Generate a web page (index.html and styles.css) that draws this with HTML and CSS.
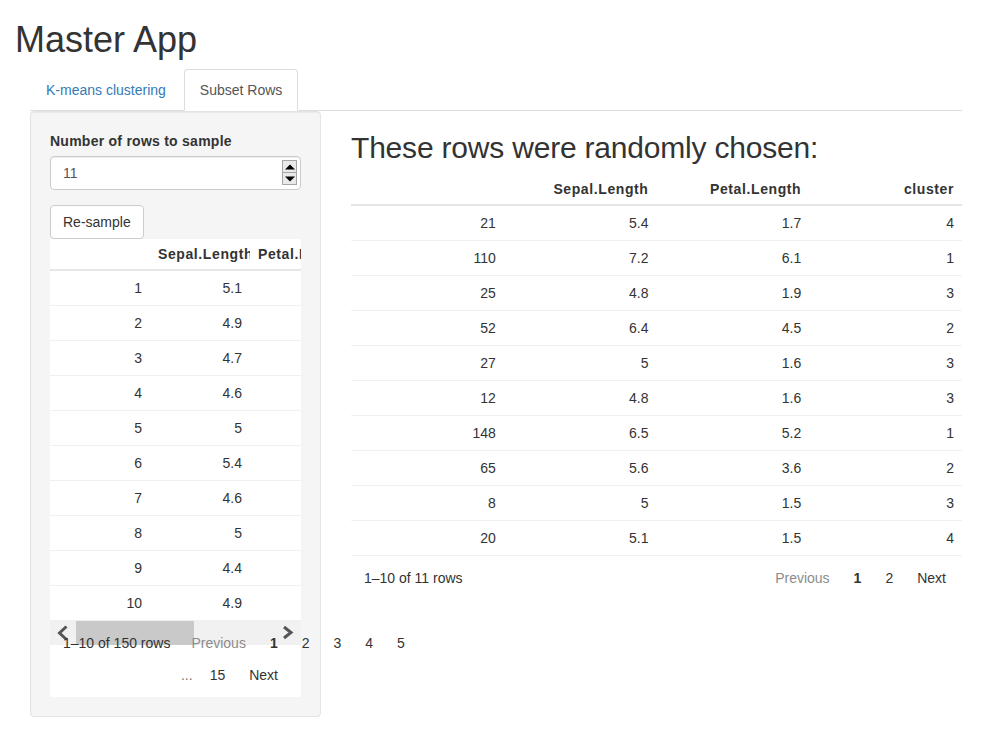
FILE: index.html
```html
<!DOCTYPE html>
<html lang="en">
<head>
<meta charset="utf-8">
<title>Master App</title>
<link rel="stylesheet" href="styles.css">
</head>
<body>
<div class="page">
  <h1 class="title">Master App</h1>
  <div class="app">
    <ul class="tabs">
      <li><a class="tab" href="#">K-means clustering</a></li>
      <li><a class="tab active" href="#">Subset Rows</a></li>
    </ul>
    <div class="content">
      <aside class="well">
        <label class="label">Number of rows to sample</label>
        <div class="num-input">
          <span class="num-value">11</span>
          <span class="spinner">
            <span class="spin-btn"><svg width="12" height="10" viewBox="0 0 12 10"><polygon points="1,7.5 11,7.5 6,2.5" fill="#000"/></svg></span>
            <span class="spin-btn"><svg width="12" height="10" viewBox="0 0 12 10"><polygon points="1,2.5 11,2.5 6,7.5" fill="#000"/></svg></span>
          </span>
        </div>
        <button class="btn">Re-sample</button>
        <div class="rt rt-small">
          <div class="rt-scroll">
            <div class="rt-row rt-head"><div class="rt-cell"></div><div class="rt-cell">Sepal.Length</div><div class="rt-cell">Petal.Length</div><div class="rt-cell">cluster</div></div>
            <div class="rt-row"><div class="rt-cell">1</div><div class="rt-cell">5.1</div><div class="rt-cell">1.4</div><div class="rt-cell">3</div></div>
            <div class="rt-row"><div class="rt-cell">2</div><div class="rt-cell">4.9</div><div class="rt-cell">1.4</div><div class="rt-cell">3</div></div>
            <div class="rt-row"><div class="rt-cell">3</div><div class="rt-cell">4.7</div><div class="rt-cell">1.3</div><div class="rt-cell">3</div></div>
            <div class="rt-row"><div class="rt-cell">4</div><div class="rt-cell">4.6</div><div class="rt-cell">1.5</div><div class="rt-cell">3</div></div>
            <div class="rt-row"><div class="rt-cell">5</div><div class="rt-cell">5</div><div class="rt-cell">1.4</div><div class="rt-cell">3</div></div>
            <div class="rt-row"><div class="rt-cell">6</div><div class="rt-cell">5.4</div><div class="rt-cell">1.7</div><div class="rt-cell">4</div></div>
            <div class="rt-row"><div class="rt-cell">7</div><div class="rt-cell">4.6</div><div class="rt-cell">1.4</div><div class="rt-cell">3</div></div>
            <div class="rt-row"><div class="rt-cell">8</div><div class="rt-cell">5</div><div class="rt-cell">1.5</div><div class="rt-cell">3</div></div>
            <div class="rt-row"><div class="rt-cell">9</div><div class="rt-cell">4.4</div><div class="rt-cell">1.4</div><div class="rt-cell">3</div></div>
            <div class="rt-row"><div class="rt-cell">10</div><div class="rt-cell">4.9</div><div class="rt-cell">1.5</div><div class="rt-cell">3</div></div>
          </div>
          <div class="rt-pagination-small">
            <div class="scrollbar">
              <span class="sb-thumb"></span>
              <svg class="sb-arrows" width="251" height="24" viewBox="0 0 251 24"><polyline points="16.5,5.5 9.5,12 16.5,18.5" fill="none" stroke="#555" stroke-width="3"/><polyline points="234,6 241,11.5 234,17" fill="none" stroke="#555" stroke-width="3"/></svg>
            </div>
            <div class="pg-line">
              <span class="rt-info">1–10 of 150 rows</span>
              <span class="rt-btn disabled">Previous</span>
              <span class="rt-btn current">1</span>
              <span class="rt-btn">2</span>
              <span class="rt-btn">3</span>
              <span class="rt-btn">4</span>
              <span class="rt-btn">5</span>
            </div>
            <div class="pg-line pg-line-end">
              <span class="rt-ellipsis">...</span>
              <span class="rt-btn">15</span>
              <span class="rt-btn">Next</span>
            </div>
          </div>
        </div>
      </aside>
      <main class="main">
        <h2 class="heading">These rows were randomly chosen:</h2>
        <div class="rt">
          <div class="rt-row rt-head"><div class="rt-cell"></div><div class="rt-cell">Sepal.Length</div><div class="rt-cell">Petal.Length</div><div class="rt-cell">cluster</div></div>
          <div class="rt-row"><div class="rt-cell">21</div><div class="rt-cell">5.4</div><div class="rt-cell">1.7</div><div class="rt-cell">4</div></div>
          <div class="rt-row"><div class="rt-cell">110</div><div class="rt-cell">7.2</div><div class="rt-cell">6.1</div><div class="rt-cell">1</div></div>
          <div class="rt-row"><div class="rt-cell">25</div><div class="rt-cell">4.8</div><div class="rt-cell">1.9</div><div class="rt-cell">3</div></div>
          <div class="rt-row"><div class="rt-cell">52</div><div class="rt-cell">6.4</div><div class="rt-cell">4.5</div><div class="rt-cell">2</div></div>
          <div class="rt-row"><div class="rt-cell">27</div><div class="rt-cell">5</div><div class="rt-cell">1.6</div><div class="rt-cell">3</div></div>
          <div class="rt-row"><div class="rt-cell">12</div><div class="rt-cell">4.8</div><div class="rt-cell">1.6</div><div class="rt-cell">3</div></div>
          <div class="rt-row"><div class="rt-cell">148</div><div class="rt-cell">6.5</div><div class="rt-cell">5.2</div><div class="rt-cell">1</div></div>
          <div class="rt-row"><div class="rt-cell">65</div><div class="rt-cell">5.6</div><div class="rt-cell">3.6</div><div class="rt-cell">2</div></div>
          <div class="rt-row"><div class="rt-cell">8</div><div class="rt-cell">5</div><div class="rt-cell">1.5</div><div class="rt-cell">3</div></div>
          <div class="rt-row"><div class="rt-cell">20</div><div class="rt-cell">5.1</div><div class="rt-cell">1.5</div><div class="rt-cell">4</div></div>
          <div class="rt-pagination">
            <span class="rt-info">1–10 of 11 rows</span>
            <span class="rt-actions">
              <span class="rt-btn disabled">Previous</span>
              <span class="rt-btn current">1</span>
              <span class="rt-btn">2</span>
              <span class="rt-btn">Next</span>
            </span>
          </div>
        </div>
      </main>
    </div>
  </div>
</div>
</body>
</html>
```

FILE: styles.css
```css
* { box-sizing: border-box; }
html, body { margin: 0; padding: 0; }
body {
  font-family: "Liberation Sans", Arial, sans-serif;
  font-size: 14px;
  line-height: 20px;
  color: #333;
  background: #fff;
}
.page { padding: 0 15px; }
.title {
  font-size: 36px;
  font-weight: normal;
  line-height: 39px;
  margin: 20px 0 10px;
}
.app { padding: 0 15px; }

.tabs {
  list-style: none;
  margin: 0;
  padding: 0;
  display: flex;
  border-bottom: 1px solid #ddd;
}
.tabs li { margin-bottom: -1px; }
.tab {
  display: block;
  padding: 10px 15px;
  margin-right: 2px;
  border: 1px solid transparent;
  border-radius: 4px 4px 0 0;
  color: #337ab7;
  text-decoration: none;
}
.tab.active {
  color: #555;
  background: #fff;
  border-color: #ddd #ddd transparent;
}

.content {
  display: flex;
  gap: 30px;
  align-items: flex-start;
}

.well {
  width: 291px;
  flex: none;
  background: #f5f5f5;
  border: 1px solid #e3e3e3;
  border-radius: 4px;
  padding: 19px;
  box-shadow: inset 0 1px 1px rgba(0,0,0,.05);
  margin-bottom: 20px;
}
.label {
  display: block;
  font-weight: bold;
  letter-spacing: 0.25px;
  margin-bottom: 5px;
}
.num-input {
  position: relative;
  height: 34px;
  padding: 6px 12px;
  background: #fff;
  border: 1px solid #ccc;
  border-radius: 4px;
  box-shadow: inset 0 1px 1px rgba(0,0,0,.075);
  color: #555;
  margin-bottom: 15px;
}
.spinner {
  position: absolute;
  left: 231px;
  top: 3px;
  width: 15px;
  height: 25px;
  display: flex;
  flex-direction: column;
  border: 1px solid #a6a6a6;
  background: #e9e9e9;
}
.spin-btn {
  flex: 1;
  display: flex;
  align-items: center;
  justify-content: center;
}
.spin-btn + .spin-btn { border-top: 1px solid #a6a6a6; }

.btn {
  display: block;
  font-family: inherit;
  font-size: 14px;
  line-height: 20px;
  padding: 6px 12px;
  color: #333;
  background: #fff;
  border: 1px solid #ccc;
  border-radius: 4px;
  margin: 0;
}

.main { flex: 1; min-width: 0; }
.heading {
  font-size: 30px;
  font-weight: normal;
  line-height: 33px;
  letter-spacing: -0.2px;
  margin: 20px 0 10px;
}

.rt { background: #fff; }
.rt-row {
  display: grid;
  grid-template-columns: repeat(4, 1fr);
  border-bottom: 1px solid #f0f0f0;
}
.rt-cell {
  padding: 7px 8px;
  text-align: right;
  white-space: nowrap;
  overflow: hidden;
}
.rt-head { border-bottom: 2px solid #e6e6e6; }
.rt-head .rt-cell {
  padding: 5px 8px;
  font-weight: bold;
  letter-spacing: 0.6px;
}

.rt-small { width: 251px; }
.rt-scroll { overflow: hidden; }
.rt-small .rt-row {
  grid-template-columns: repeat(4, 100px);
  width: 400px;
}

.rt-pagination {
  display: flex;
  justify-content: space-between;
  align-items: center;
  padding: 6px 4px;
}
.rt-info { margin: 0 9px; }
.rt-actions { display: flex; }
.rt-btn { padding: 6px 12px; }
.rt-btn.disabled { color: #8c8c8c; }
.rt-btn.current { font-weight: bold; }
.rt-ellipsis { padding: 6px 0; margin-right: 5px; color: #777; }

.rt-pagination-small {
  position: relative;
  padding: 6px 4px;
}
.scrollbar {
  position: absolute;
  left: 0;
  top: 0;
  width: 251px;
  height: 24px;
  background: #f1f1f1;
}
.sb-thumb {
  position: absolute;
  left: 26px;
  top: 0;
  width: 118px;
  height: 24px;
  background: #c9c9c9;
}
.sb-arrows { position: absolute; left: 0; top: 0; }
.pg-line {
  position: relative;
  display: flex;
  align-items: center;
  white-space: nowrap;
}
.pg-line-end {
  justify-content: flex-end;
  padding-right: 7px;
}
```
